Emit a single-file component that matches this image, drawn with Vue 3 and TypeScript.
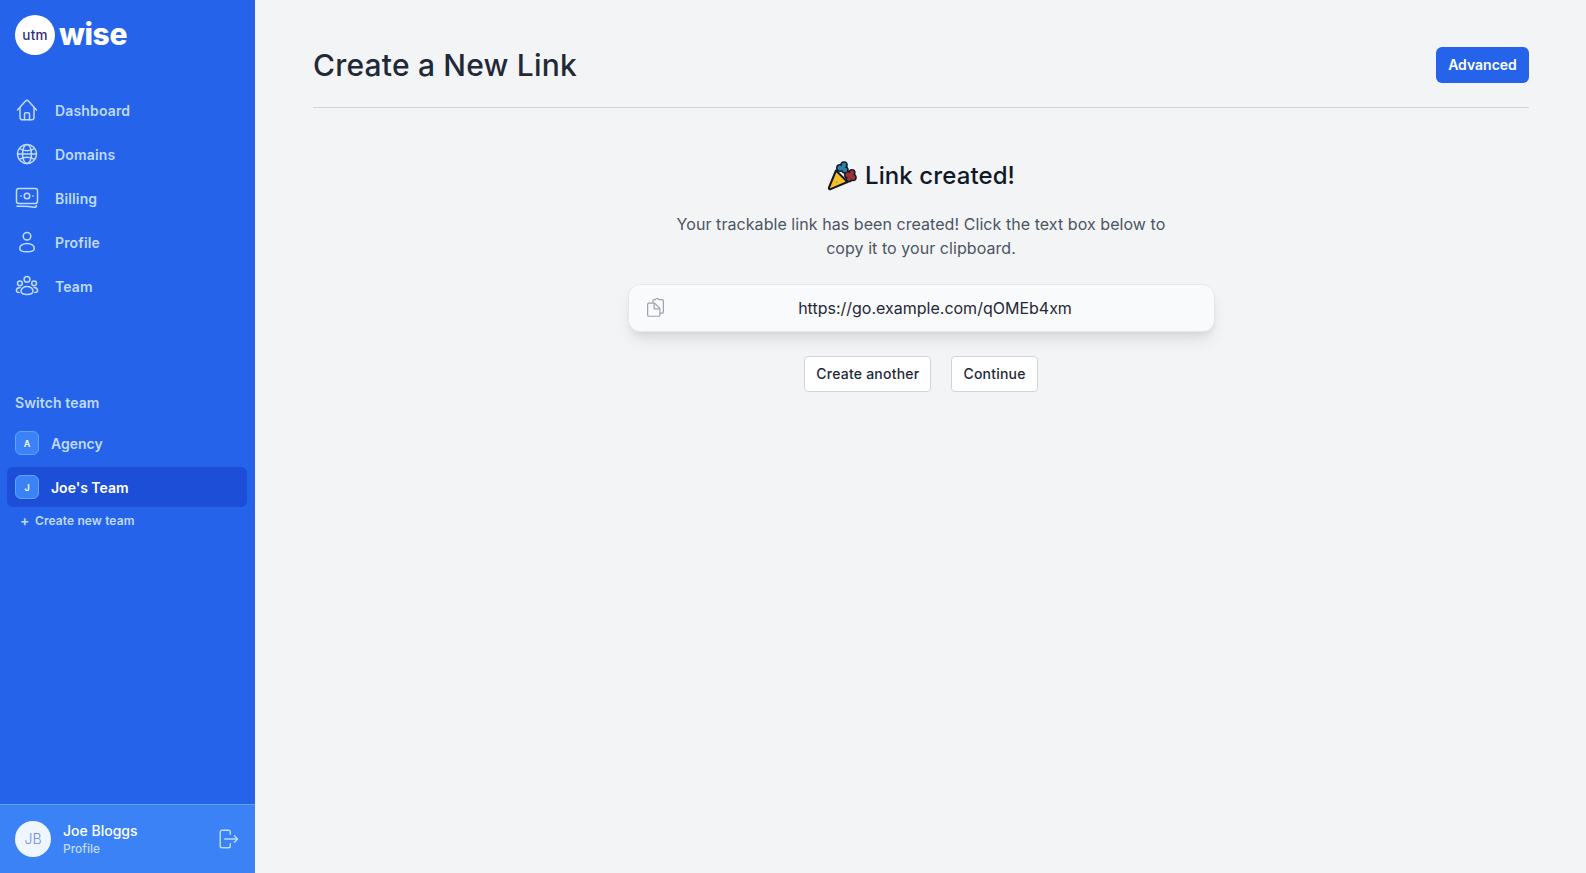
<script setup lang="ts">
const navItems = [
  { label: 'Dashboard', icon: 'home' },
  { label: 'Domains', icon: 'globe' },
  { label: 'Billing', icon: 'cash' },
  { label: 'Profile', icon: 'user' },
  { label: 'Team', icon: 'team' },
]

const teams = [
  { initial: 'A', name: 'Agency', active: false },
  { initial: 'J', name: "Joe's Team", active: true },
]
</script>

<template>
  <div class="page">
    <aside class="sidebar">
      <div class="logo">
        <span class="logo-badge">utm</span>
        <span class="logo-word">wise</span>
      </div>

      <nav class="nav">
        <a v-for="item in navItems" :key="item.label" class="nav-item">
          <svg class="nav-icon" viewBox="0 0 24 24" fill="none" stroke="currentColor" stroke-width="1.500" stroke-linecap="round" stroke-linejoin="round">
            <template v-if="item.icon === 'home'">
              <path d="M2.500 12 10.600 2.900a1.900 1.900 0 0 1 2.800 0L21.500 12" />
              <path d="M5 9.500V19.500a2.300 2.300 0 0 0 2.300 2.300h9.400a2.300 2.300 0 0 0 2.300-2.300V9.500" />
              <path d="M9.500 21.800V16a1.200 1.200 0 0 1 1.200-1.200h2.600a1.200 1.200 0 0 1 1.200 1.200v5.800" />
            </template>
            <template v-else-if="item.icon === 'globe'">
              <circle cx="12" cy="12" r="9.500" />
              <ellipse cx="12" cy="12" rx="4.500" ry="9.500" />
              <path d="M4.500 6.500c4 3 11 3 15 0M4.500 17.500c4-3 11-3 15 0M2.500 12h19" />
            </template>
            <template v-else-if="item.icon === 'cash'">
              <rect x="1.500" y="2.500" width="21" height="15" rx="2.200" />
              <circle cx="12" cy="10" r="2.800" />
              <path d="M5.800 10h.4M17.800 10h.4" />
              <path d="M2 20.300c6-.2 12.500 0 17.500 1 1 .2 1.800-.4 1.800-1.300v-.6" />
            </template>
            <template v-else-if="item.icon === 'user'">
              <circle cx="12" cy="6.300" r="3.800" />
              <path d="M12 13.500c-4.300 0-7.300 2.300-7.300 4.900 0 2 3 3.300 7.300 3.300s7.300-1.300 7.300-3.300c0-2.600-3-4.900-7.300-4.900Z" />
            </template>
            <template v-else>
              <circle cx="12" cy="5.300" r="2.900" />
              <circle cx="4.900" cy="9.300" r="2.400" />
              <circle cx="19.100" cy="9.300" r="2.400" />
              <path d="M12 12.500c-3.500 0-6 2.100-6 4.400 0 2 2.500 3.500 6 3.500s6-1.500 6-3.500c0-2.300-2.500-4.400-6-4.400Z" />
              <path d="M5 13.500c-2.200.2-3.600 1.500-3.600 2.900 0 1.100 1.100 1.900 2.800 2.100M19 13.500c2.200.2 3.600 1.500 3.600 2.900 0 1.100-1.100 1.900-2.800 2.100" />
            </template>
          </svg>
          <span>{{ item.label }}</span>
        </a>
      </nav>

      <div class="teams">
        <div class="teams-title">Switch team</div>
        <a v-for="team in teams" :key="team.name" class="team" :class="{ active: team.active }">
          <span class="team-badge">{{ team.initial }}</span>
          <span>{{ team.name }}</span>
        </a>
        <a class="new-team"><span class="plus">+</span>Create new team</a>
      </div>

      <div class="user">
        <span class="avatar">JB</span>
        <div class="user-text">
          <div class="user-name">Joe Bloggs</div>
          <div class="user-sub">Profile</div>
        </div>
        <svg class="logout" viewBox="0 0 24 24" fill="none" stroke="currentColor" stroke-width="1.500" stroke-linecap="round" stroke-linejoin="round">
          <path d="M14.500 7V4.500a2 2 0 0 0-2-2h-7a2 2 0 0 0-2 2v15a2 2 0 0 0 2 2h7a2 2 0 0 0 2-2V17" />
          <path d="M8.500 12h14M19 8.500l3.500 3.500-3.500 3.500" />
        </svg>
      </div>
    </aside>

    <main class="main">
      <header class="header">
        <h1>Create a New Link</h1>
        <button class="advanced">Advanced</button>
      </header>

      <section class="result">
        <h2>
          <svg class="party" viewBox="0 0 30 30">
            <g stroke="#111827" stroke-width="1.600">
              <circle cx="13" cy="7" r="3.200" fill="#2b7fa8" />
              <circle cx="17" cy="4" r="3" fill="#2b7fa8" />
              <circle cx="18" cy="9" r="3" fill="#2b7fa8" />
              <circle cx="21" cy="14" r="3.200" fill="#9b3436" />
              <circle cx="25" cy="11.500" r="2.800" fill="#9b3436" />
              <circle cx="26" cy="16.500" r="3" fill="#9b3436" />
              <circle cx="22" cy="18" r="2.600" fill="#9b3436" />
            </g>
            <g fill="#2b7fa8">
              <circle cx="13" cy="7" r="2.400" />
              <circle cx="17" cy="4" r="2.200" />
              <circle cx="18" cy="9" r="2.200" />
              <circle cx="15.500" cy="7" r="2.500" />
            </g>
            <g fill="#9b3436">
              <circle cx="21" cy="14" r="2.400" />
              <circle cx="25" cy="11.500" r="2" />
              <circle cx="26" cy="16.500" r="2.200" />
              <circle cx="22" cy="18" r="1.800" />
              <circle cx="24" cy="14.500" r="2.500" />
            </g>
            <path d="M9 9.500 2 26.500c-.5 1.200.5 2.100 1.600 1.600L20.500 21Z" fill="#fbbf24" stroke="#111827" stroke-width="2" stroke-linejoin="round" />
            <circle cx="9.500" cy="21" r="1" fill="#2dd4bf" />
          </svg>
          Link created!
        </h2>
        <p>Your trackable link has been created! Click the text box below to copy it to your clipboard.</p>

        <div class="link-box">
          <svg class="copy" viewBox="0 0 24 24" fill="none" stroke="currentColor" stroke-width="1.400" stroke-linejoin="round">
            <path d="M9 6.500V4.500A1.500 1.500 0 0 1 10.500 3H12c.3-1.300 1-1.500 1.800-1.500s1.500.2 1.800 1.500h3.900A1.500 1.500 0 0 1 21 4.500V17a1.500 1.500 0 0 1-1.500 1.500H17" />
            <path d="M4.500 7h6.500l6 6v7.500a1.500 1.500 0 0 1-1.500 1.500h-11A1.500 1.500 0 0 1 3 20.500v-12A1.500 1.500 0 0 1 4.500 7Z" fill="#f9fafb" />
            <path d="M10.500 7.500V13.500h6" />
          </svg>
          <span>https://go.example.com/qOMEb4xm</span>
        </div>

        <div class="actions">
          <button class="plain">Create another</button>
          <button class="plain">Continue</button>
        </div>
      </section>
    </main>
  </div>
</template>

<style>
html,
body {
  margin: 0;
  background: #f3f4f6;
}
</style>

<style scoped>
.page {
  display: flex;
  height: 873px;
  font-family: Inter, "Noto Sans", sans-serif;
  overflow: hidden;
}

.sidebar {
  width: 255px;
  flex: none;
  display: flex;
  flex-direction: column;
  background: #2563eb;
  color: #bfdbfe;
}

.logo {
  display: flex;
  align-items: center;
  height: 40px;
  padding: 15px 0 0 15px;
}

.logo-badge {
  width: 40px;
  height: 40px;
  border-radius: 50%;
  background: #fff;
  color: #312e81;
  display: flex;
  align-items: center;
  justify-content: center;
  font-size: 13.500px;
  font-weight: 500;
  letter-spacing: 0.2px;
}

.logo-word {
  margin-left: 4px;
  margin-top: -3px;
  font-size: 30px;
  line-height: 36px;
  font-weight: 800;
  color: #fff;
  letter-spacing: -0.4px;
}

.nav {
  margin-top: 35px;
  padding: 0 7px;
  display: flex;
  flex-direction: column;
  gap: 4px;
}

.nav-item {
  display: flex;
  align-items: center;
  height: 40px;
  padding-left: 8px;
  font-size: 14px;
  font-weight: 600;
  letter-spacing: 0.15px;
}

.nav-icon {
  width: 24px;
  height: 24px;
  margin-right: 16px;
  color: #bfdbfe;
}

.teams {
  margin-top: 87px;
  padding: 0 8px 0 7px;
}

.teams-title {
  padding-left: 8px;
  font-size: 14px;
  font-weight: 600;
  line-height: 20px;
  letter-spacing: 0.1px;
  margin-bottom: 10px;
}

.team {
  display: flex;
  align-items: center;
  height: 40px;
  padding-left: 8px;
  border-radius: 6px;
  font-size: 14px;
  font-weight: 600;
  margin-bottom: 4px;
}

.team.active {
  background: #1d4ed8;
  color: #fff;
}

.team-badge {
  width: 22px;
  height: 22px;
  border: 1px solid #60a5fa;
  border-radius: 6px;
  background: #3b82f6;
  color: #fff;
  display: flex;
  align-items: center;
  justify-content: center;
  font-size: 9px;
  font-weight: 600;
  margin-right: 12px;
}

.new-team {
  display: flex;
  align-items: center;
  padding-left: 13px;
  font-size: 12px;
  line-height: 16px;
  font-weight: 600;
  letter-spacing: 0.1px;
  margin-top: 6px;
}

.plus {
  width: 9px;
  margin-right: 6px;
  font-size: 14px;
  line-height: 16px;
}

.user {
  margin-top: auto;
  height: 69px;
  box-sizing: border-box;
  border-top: 1px solid #60a5fa;
  background: #3b82f6;
  display: flex;
  align-items: center;
  padding: 0 16px 1px 15px;
}

.avatar {
  width: 36px;
  height: 36px;
  border-radius: 50%;
  background: #eff6ff;
  color: #6b8fe8;
  display: flex;
  align-items: center;
  justify-content: center;
  font-size: 14px;
  font-weight: 300;
}

.user-text {
  margin-left: 12px;
  flex: 1;
}

.user-name {
  font-size: 14px;
  line-height: 20px;
  font-weight: 500;
  color: #fff;
}

.user-sub {
  font-size: 12px;
  line-height: 16px;
  font-weight: 500;
  color: #bfdbfe;
}

.logout {
  width: 22px;
  height: 22px;
  color: #bfdbfe;
}

.main {
  flex: 1;
  padding: 0 57px 0 58px;
}

.header {
  box-sizing: border-box;
  border-bottom: 1px solid #d1d5db;
  display: flex;
  align-items: center;
  justify-content: space-between;
  padding: 47px 0 24px;
}

h1 {
  margin: 0;
  font-size: 30px;
  line-height: 36px;
  font-weight: 550;
  color: #1f2937;
  letter-spacing: 0.2px;
}

.advanced {
  width: 93px;
  height: 36px;
  padding: 0 0 2px;
  border: 0;
  border-radius: 6px;
  background: #2563eb;
  color: #fff;
  font: 600 14px Inter, sans-serif;
}

.result {
  display: flex;
  flex-direction: column;
  align-items: center;
}

h2 {
  display: flex;
  align-items: center;
  margin: 52px 0 0;
  font-size: 24px;
  line-height: 32px;
  font-weight: 550;
  letter-spacing: 0.1px;
  color: #111827;
}

.party {
  width: 30px;
  height: 30px;
  margin-right: 8px;
}

p {
  width: 512px;
  margin: 20px 0 0;
  text-align: center;
  font-size: 16px;
  line-height: 24px;
  letter-spacing: 0.06px;
  color: #4b5563;
}

.link-box {
  position: relative;
  width: 587px;
  height: 48px;
  margin-top: 24px;
  box-sizing: border-box;
  border: 1px solid #e5e7eb;
  border-radius: 12px;
  background: #f9fafb;
  box-shadow: 0 10px 15px -3px rgba(0, 0, 0, 0.1), 0 4px 6px -2px rgba(0, 0, 0, 0.05);
  display: flex;
  align-items: center;
  justify-content: center;
  font-size: 16px;
  color: #1f2937;
  padding-left: 28px;
}

.copy {
  position: absolute;
  left: 16px;
  top: 12px;
  width: 21px;
  height: 21px;
  color: #9ca3af;
}

.actions {
  display: flex;
  gap: 20px;
  margin-top: 24px;
}

.plain {
  height: 36px;
  padding: 0 11px 2px;
  border: 1px solid #d1d5db;
  border-radius: 4px;
  background: #fff;
  color: #1f2937;
  font: 550 14px Inter, sans-serif;
  letter-spacing: 0.22px;
}
</style>
